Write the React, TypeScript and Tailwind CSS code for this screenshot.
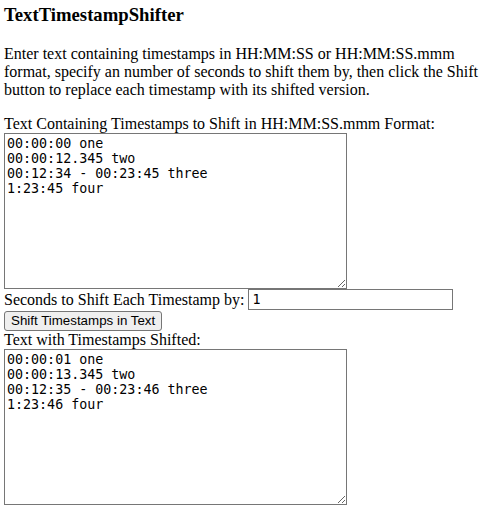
import { ReactElement, useState } from "react";

const INITIAL_TEXT = `00:00:00 one
00:00:12.345 two
00:12:34 - 00:23:45 three
1:23:45 four`;

const pad = (n: number, width = 2): string => String(n).padStart(width, "0");

// shift every H:MM:SS(.mmm) timestamp in the text by a number of seconds
const shiftText = (text: string, seconds: number): string =>
  text.replace(/(\d+):(\d{2}):(\d{2})(\.(\d{3}))?/g, (match, h, m, s, frac, ms) => {
    const total =
      Number(h) * 3600000 + Number(m) * 60000 + Number(s) * 1000 + (ms ? Number(ms) : 0) + seconds * 1000;
    if (total < 0) return match;
    const hh = Math.floor(total / 3600000);
    const mm = Math.floor((total % 3600000) / 60000);
    const ss = Math.floor((total % 60000) / 1000);
    const rest = total % 1000;
    const hours = h.length >= 2 ? pad(hh, h.length) : String(hh);
    return `${hours}:${pad(mm)}:${pad(ss)}${frac ? "." + pad(rest, 3) : ""}`;
  });

const App = (): ReactElement => {
  const [input, setInput] = useState(INITIAL_TEXT);
  const [seconds, setSeconds] = useState("1");
  const [output, setOutput] = useState(shiftText(INITIAL_TEXT, 1));

  return (
    <div className="px-1 pt-1 font-['Liberation_Serif',serif] text-[16px] leading-[normal] text-black bg-white min-h-screen">
      {/* Title */}
      <h3 className="text-[18.72px] font-bold leading-[normal] mb-[18.72px]">TextTimestampShifter</h3>

      <p className="mb-4">
        Enter text containing timestamps in HH:MM:SS or HH:MM:SS.mmm format, specify an number of seconds to shift them
        by, then click the Shift button to replace each timestamp with its shifted version.
      </p>

      <label className="block">Text Containing Timestamps to Shift in HH:MM:SS.mmm Format:</label>
      <textarea
        className="block w-[343px] h-[156px] border border-[#767676] p-[2px] font-['DejaVu_Sans_Mono',monospace] text-[13.33px] leading-[15px] text-black"
        value={input}
        onChange={(e) => setInput(e.target.value)}
      />

      {/* Seconds input */}
      <div className="flex items-center h-[22px]">
        <span className="mr-1">Seconds to Shift Each Timestamp by:</span>
        <input
          className="w-[205px] h-[21px] border border-[#767676] px-[3px] font-['DejaVu_Sans_Mono',monospace] text-[13.33px] text-black"
          value={seconds}
          onChange={(e) => setSeconds(e.target.value)}
        />
      </div>

      <button
        className="block h-[20px] px-[6px] bg-[#efefef] border border-[#767676] rounded-[3px] font-['Liberation_Sans',Arial,sans-serif] text-[13.33px] leading-[normal] text-black"
        onClick={() => setOutput(shiftText(input, Number(seconds) || 0))}
      >
        Shift Timestamps in Text
      </button>

      <label className="block">Text with Timestamps Shifted:</label>
      <textarea
        className="block w-[343px] h-[156px] border border-[#767676] p-[2px] font-['DejaVu_Sans_Mono',monospace] text-[13.33px] leading-[15px] text-black"
        value={output}
        readOnly
      />
    </div>
  );
};

export default App;
